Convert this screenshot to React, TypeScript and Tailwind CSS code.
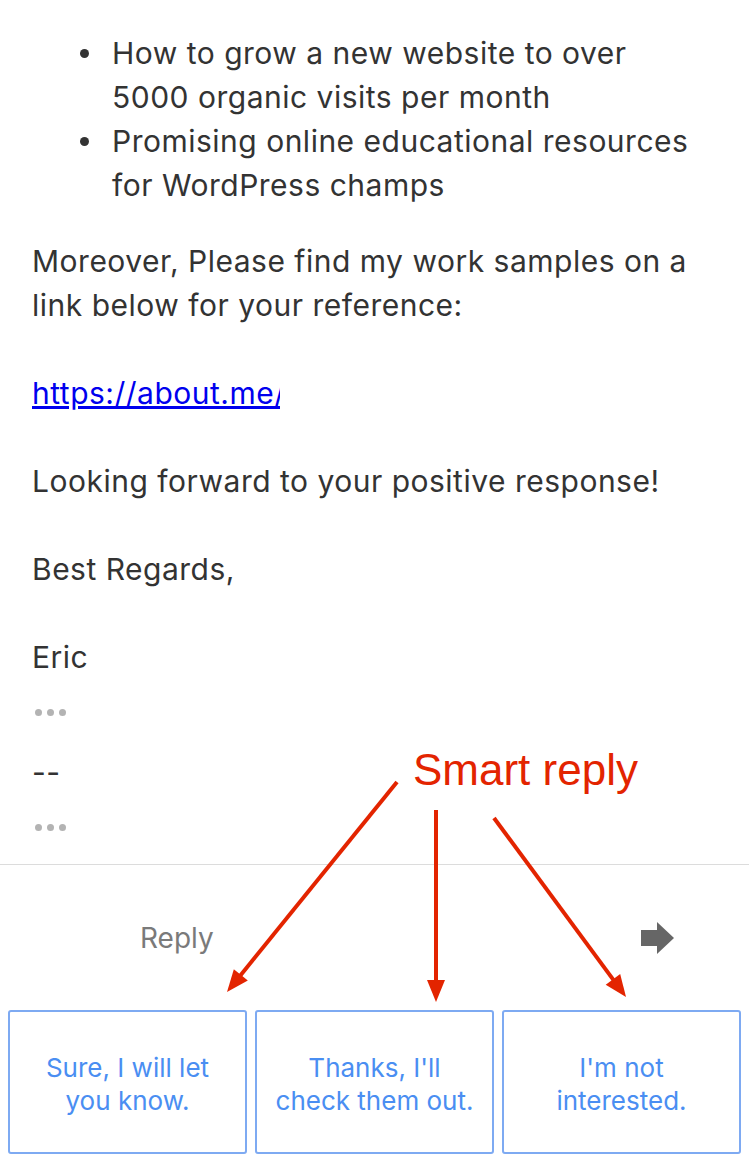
const arrows = [
  { x1: 397, y1: 782, x2: 227, y2: 992 },
  { x1: 436, y1: 810, x2: 436, y2: 1002 },
  { x1: 494, y1: 818, x2: 626, y2: 997 },
]

const head = (a: { x1: number; y1: number; x2: number; y2: number }) => {
  const dx = a.x2 - a.x1
  const dy = a.y2 - a.y1
  const len = Math.hypot(dx, dy)
  const ux = dx / len
  const uy = dy / len
  const bx = a.x2 - ux * 22
  const by = a.y2 - uy * 22
  const px = -uy * 9
  const py = ux * 9
  return {
    line: { x2: bx + ux * 2, y2: by + uy * 2 },
    points: `${a.x2},${a.y2} ${bx + px},${by + py} ${bx - px},${by - py}`,
  }
}

const Dots = () => (
  <div className="flex items-center gap-[5px] pl-[3px]">
    <span className="h-[7px] w-[7px] rounded-full bg-[#b3b3b3]" />
    <span className="h-[7px] w-[7px] rounded-full bg-[#b3b3b3]" />
    <span className="h-[7px] w-[7px] rounded-full bg-[#b3b3b3]" />
  </div>
)

const bullets = [
  ['How to grow a new website to over', '5000 organic visits per month'],
  ['Promising online educational resources', 'for WordPress champs'],
]

const replies = [
  ['Sure, I will let', 'you know.'],
  ["Thanks, I'll", 'check them out.'],
  ["I'm not", 'interested.'],
]

export default function App() {
  return (
    <div className="relative h-[1163px] w-[749px] overflow-hidden bg-white font-['Inter',sans-serif]">
      <div className="px-8 pt-[31px] text-[30px] leading-[44px] tracking-[0.5px] text-[#333]">
        <ul className="pl-[48px]">
          {bullets.map((b) => (
            <li key={b[0]} className="flex">
              <span className="flex h-[44px] w-[32px] shrink-0 items-center">
                <span className="h-[9px] w-[9px] rounded-full bg-[#333]" />
              </span>
              <span>
                {b[0]}
                <br />
                {b[1]}
              </span>
            </li>
          ))}
        </ul>

        <p className="mt-8">
          Moreover, Please find my work samples on a
          <br />
          link below for your reference:
        </p>
        <p className="mt-[44px]">
          <a
            href="#"
            className="inline-block w-[248px] overflow-hidden whitespace-nowrap align-top text-[#0000ee] underline"
          >
            https://about.me/
          </a>
        </p>
        <p className="mt-[44px]">Looking forward to your positive response!</p>
        <p className="mt-[44px]">Best Regards,</p>
        <p className="mt-[44px]">Eric</p>

        <div className="mt-[30px]">
          <Dots />
        </div>
        <p className="mt-[34px]">--</p>
        <div className="mt-[30px]">
          <Dots />
        </div>
      </div>

      <div className="mt-[33px] border-t border-[#dcdcdc]">
        <div className="flex h-[145px] items-center justify-between pl-[140px] pr-[74px]">
          <span className="text-[28px] text-[#7a7a7a]">Reply</span>
          <svg width="34" height="32" viewBox="0 0 34 32" aria-hidden="true">
            <rect x="0" y="8" width="17" height="16" fill="#666" />
            <polygon points="16,0 33,16 16,32" fill="#666" />
          </svg>
        </div>

        <div className="grid grid-cols-3 gap-2 px-2 pb-2">
          {replies.map((r) => (
            <button
              key={r[0]}
              className="flex h-[144px] flex-col items-center justify-center rounded-[3px] border-2 border-[#7eaaf2] pt-1 text-[26px] leading-[33px] text-[#4a8ef2]"
            >
              <span>{r[0]}</span>
              <span>{r[1]}</span>
            </button>
          ))}
        </div>
      </div>

      <svg className="pointer-events-none absolute inset-0" width="749" height="1163" aria-hidden="true">
        {arrows.map((a) => {
          const h = head(a)
          return (
            <g key={a.x1}>
              <line x1={a.x1} y1={a.y1} x2={h.line.x2} y2={h.line.y2} stroke="#e32400" strokeWidth="4" />
              <polygon points={h.points} fill="#e32400" />
            </g>
          )
        })}
      </svg>
      <span className="absolute left-[413px] top-[744px] font-['Liberation_Sans',sans-serif] text-[44px] leading-[52px] text-[#e32400]">
        Smart reply
      </span>
    </div>
  )
}
